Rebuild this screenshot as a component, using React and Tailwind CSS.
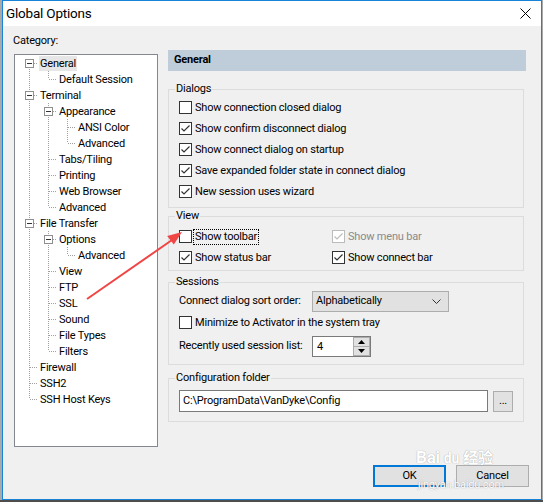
import React from 'react';

const tree = [
  { label: 'General', d: 0, sel: true },
  { label: 'Default Session', d: 1 },
  { label: 'Terminal', d: 0 },
  { label: 'Appearance', d: 1 },
  { label: 'ANSI Color', d: 2 },
  { label: 'Advanced', d: 2 },
  { label: 'Tabs/Tiling', d: 1 },
  { label: 'Printing', d: 1 },
  { label: 'Web Browser', d: 1 },
  { label: 'Advanced', d: 1 },
  { label: 'File Transfer', d: 0 },
  { label: 'Options', d: 1 },
  { label: 'Advanced', d: 2 },
  { label: 'View', d: 1 },
  { label: 'FTP', d: 1 },
  { label: 'SSL', d: 1 },
  { label: 'Sound', d: 1 },
  { label: 'File Types', d: 1 },
  { label: 'Filters', d: 1 },
  { label: 'Firewall', d: 0 },
  { label: 'SSH2', d: 0 },
  { label: 'SSH Host Keys', d: 0 },
];

// true when a later sibling at depth k follows row i
const continues = (i, k) => {
  for (let j = i + 1; j < tree.length; j++) {
    if (tree[j].d < k) return false;
    if (tree[j].d === k) return true;
  }
  return false;
};

const Guide = ({ kind, box, first }) => (
  <svg width="19" height="16" className="shrink-0" shapeRendering="crispEdges">
    <g stroke="#a0a0a0" strokeDasharray="1 1">
      {kind === 'line' && <line x1="9.5" y1="0" x2="9.5" y2="16" />}
      {(kind === 'tee' || kind === 'elbow') && !first && <line x1="9.5" y1="0" x2="9.5" y2="8" />}
      {kind === 'tee' && <line x1="9.5" y1="8" x2="9.5" y2="16" />}
      {(kind === 'tee' || kind === 'elbow') && <line x1={box ? 14 : 10} y1="8.5" x2="18" y2="8.5" />}
    </g>
    {box && (
      <g>
        <rect x="5.5" y="4.5" width="8" height="8" fill="#fff" stroke="#8f8f8f" />
        <line x1="7" y1="8.5" x2="12" y2="8.5" stroke="#333" />
      </g>
    )}
  </svg>
);

const TreeRow = ({ item, i }) => {
  const cells = [];
  for (let k = 0; k < item.d; k++) {
    cells.push(<Guide key={k} kind={continues(i, k) ? 'line' : 'none'} />);
  }
  const hasKids = tree[i + 1] && tree[i + 1].d > item.d;
  cells.push(
    <Guide key="c" kind={continues(i, item.d) ? 'tee' : 'elbow'} box={hasKids} first={i === 0} />
  );
  return (
    <div className="flex h-[16px] items-center">
      {cells}
      <span className={`px-px h-[15px] leading-[15px] whitespace-nowrap ${item.sel ? 'bg-[#e6e6e6]' : ''}`}>
        {item.label}
      </span>
    </div>
  );
};

const Check = ({ checked, disabled }) => (
  <span
    className={`w-[13px] h-[13px] shrink-0 border bg-white flex items-center justify-center ${
      disabled ? 'border-[#bcbcbc]' : 'border-[#333333]'
    }`}
  >
    {checked && (
      <svg width="11" height="11">
        <polyline
          points="1.5,5.5 4,8 9.5,2.5"
          fill="none"
          stroke={disabled ? '#bcbcbc' : '#333333'}
          strokeWidth="1.2"
        />
      </svg>
    )}
  </span>
);

const CheckRow = ({ label, checked, disabled, focus }) => (
  <div className="flex items-center h-[21px] ml-[4px]">
    <Check checked={checked} disabled={disabled} />
    <span
      className={`ml-[2px] px-px leading-[14px] whitespace-nowrap ${disabled ? 'text-[#8a8a8a]' : ''} ${
        focus ? 'outline outline-1 outline-dotted outline-black' : ''
      }`}
    >
      {label}
    </span>
  </div>
);

export default function App() {
  return (
    <div className="relative w-[543px] h-[502px] overflow-hidden bg-[#a9a9a9] font-[Roboto,sans-serif] text-[11px] tracking-[-0.2px] text-black">
      <div className="ml-[2px] w-[540px] h-[500px] border border-[#1883d7] bg-[#f0f0f0] flex flex-col">
        {/* title bar */}
        <div className="h-[25px] bg-white flex items-center justify-between pl-[3px] pr-[10px]">
          <span className="text-[13.5px]">Global Options</span>
          <svg width="11" height="11">
            <path d="M0.5 0.5 L10.5 10.5 M10.5 0.5 L0.5 10.5" stroke="#000" strokeWidth="1" />
          </svg>
        </div>

        <div className="flex flex-1">
          {/* category tree */}
          <div className="ml-[11px] w-[144px] flex flex-col">
            <div className="mt-[7px] h-[16px] leading-[16px] -ml-px">Category:</div>
            <div className="mt-[5px] h-[393px] border border-[#828790] bg-white pl-[5px]">
              {tree.map((item, i) => (
                <TreeRow key={i} item={item} i={i} />
              ))}
            </div>
          </div>

          {/* options panel */}
          <div className="ml-[10px] w-[361px] flex flex-col">
            <div className="mt-[24px] w-[358px] h-[21px] bg-[#bfcddb] font-bold pl-[6px] flex items-center">
              General
            </div>

            <fieldset className="mt-[10px] w-[356px] border border-[#dcdcdc] px-[6px] pb-[5px]">
              <legend className="px-px leading-[16px]">Dialogs</legend>
              <CheckRow label="Show connection closed dialog" />
              <CheckRow label="Show confirm disconnect dialog" checked />
              <CheckRow label="Show connect dialog on startup" checked />
              <CheckRow label="Save expanded folder state in connect dialog" checked />
              <CheckRow label="New session uses wizard" checked />
            </fieldset>

            <fieldset className="w-[356px] border border-[#dcdcdc] px-[6px] pt-[2px] pb-[2px]">
              <legend className="px-px leading-[16px]">View</legend>
              <div className="grid grid-cols-[157px_1fr]">
                <CheckRow label="Show toolbar" focus />
                <div className="-ml-[4px]">
                  <CheckRow label="Show menu bar" checked disabled />
                </div>
                <CheckRow label="Show status bar" checked />
                <div className="-ml-[4px]">
                  <CheckRow label="Show connect bar" checked />
                </div>
              </div>
            </fieldset>

            <fieldset className="mt-[3px] w-[356px] border border-[#dcdcdc] px-[6px] pb-[7px]">
              <legend className="px-px leading-[16px]">Sessions</legend>
              <div className="flex items-center h-[22px] ml-[4px]">
                <span className="w-[133px] whitespace-nowrap">Connect dialog sort order:</span>
                <div className="w-[137px] h-[21px] border border-[#adadad] bg-[#e1e1e1] flex items-center justify-between pl-[3px] pr-[7px]">
                  <span>Alphabetically</span>
                  <svg width="9" height="5">
                    <polyline points="0.5,0.5 4.5,4.5 8.5,0.5" fill="none" stroke="#333" />
                  </svg>
                </div>
              </div>
              <CheckRow label="Minimize to Activator in the system tray" />
              <div className="flex items-center h-[22px] mt-[2px] ml-[4px]">
                <span className="w-[133px] whitespace-nowrap">Recently used session list:</span>
                <div className="h-[21px] flex border border-[#7a7a7a] bg-white">
                  <span className="w-[40px] pl-[4px] leading-[19px]">4</span>
                  <div className="w-[17px] flex flex-col">
                    <div className="flex-1 border border-[#adadad] bg-[#e1e1e1] flex items-center justify-center">
                      <svg width="7" height="4">
                        <polygon points="3.5,0 7,4 0,4" fill="#000" />
                      </svg>
                    </div>
                    <div className="flex-1 border border-[#adadad] border-t-0 bg-[#e1e1e1] flex items-center justify-center">
                      <svg width="7" height="4">
                        <polygon points="0,0 7,0 3.5,4" fill="#000" />
                      </svg>
                    </div>
                  </div>
                </div>
              </div>
            </fieldset>

            <fieldset className="mt-[5px] w-[356px] border border-[#dcdcdc] px-[6px] pb-[9px]">
              <legend className="px-px leading-[16px]">Configuration folder</legend>
              <div className="mt-[4px] ml-[4px] flex items-center">
                <div className="w-[309px] h-[22px] border border-[#7a7a7a] bg-white pl-[3px] leading-[20px] whitespace-nowrap">
                  C:\ProgramData\VanDyke\Config
                </div>
                <div className="ml-[5px] w-[20px] h-[21px] border border-[#adadad] bg-[#e1e1e1] flex items-center justify-center leading-[14px]">
                  ...
                </div>
              </div>
            </fieldset>

            <div className="mt-[43px] flex justify-end gap-[10px]">
              <div className="w-[73px] h-[22px] border-2 border-[#0078d7] bg-[#e1e1e1] flex items-center justify-center">
                OK
              </div>
              <div className="w-[73px] h-[22px] border border-[#adadad] bg-[#e1e1e1] flex items-center justify-center">
                Cancel
              </div>
            </div>
          </div>
        </div>
      </div>
      <div className="h-[2px] bg-[#4d4d4d]" />

      {/* annotation arrow */}
      <svg className="absolute left-0 top-0 pointer-events-none" width="543" height="502">
        <line x1="87" y1="299" x2="172" y2="240" stroke="#f04545" strokeWidth="2" />
        <polygon points="182,232 173.8,244.5 167.2,236" fill="#f04545" />
      </svg>

      {/* watermark */}
      <div className="absolute left-[416px] top-[448px] flex items-end gap-[4px] text-white [text-shadow:0_0_1px_#8c8c8c] pointer-events-none">
        <span className="text-[17px] font-bold leading-[18px]">Bai</span>
        <span className="text-[14px] font-bold leading-[16px]">du</span>
        <span className="text-[15px] font-bold leading-[18px] font-['Noto_Sans_CJK_SC',sans-serif]">经验</span>
      </div>
      <div className="absolute left-[418px] top-[477px] text-[11px] text-white [text-shadow:0_0_1px_#8c8c8c] pointer-events-none">
        jingyan.baidu.com
      </div>
    </div>
  );
}
